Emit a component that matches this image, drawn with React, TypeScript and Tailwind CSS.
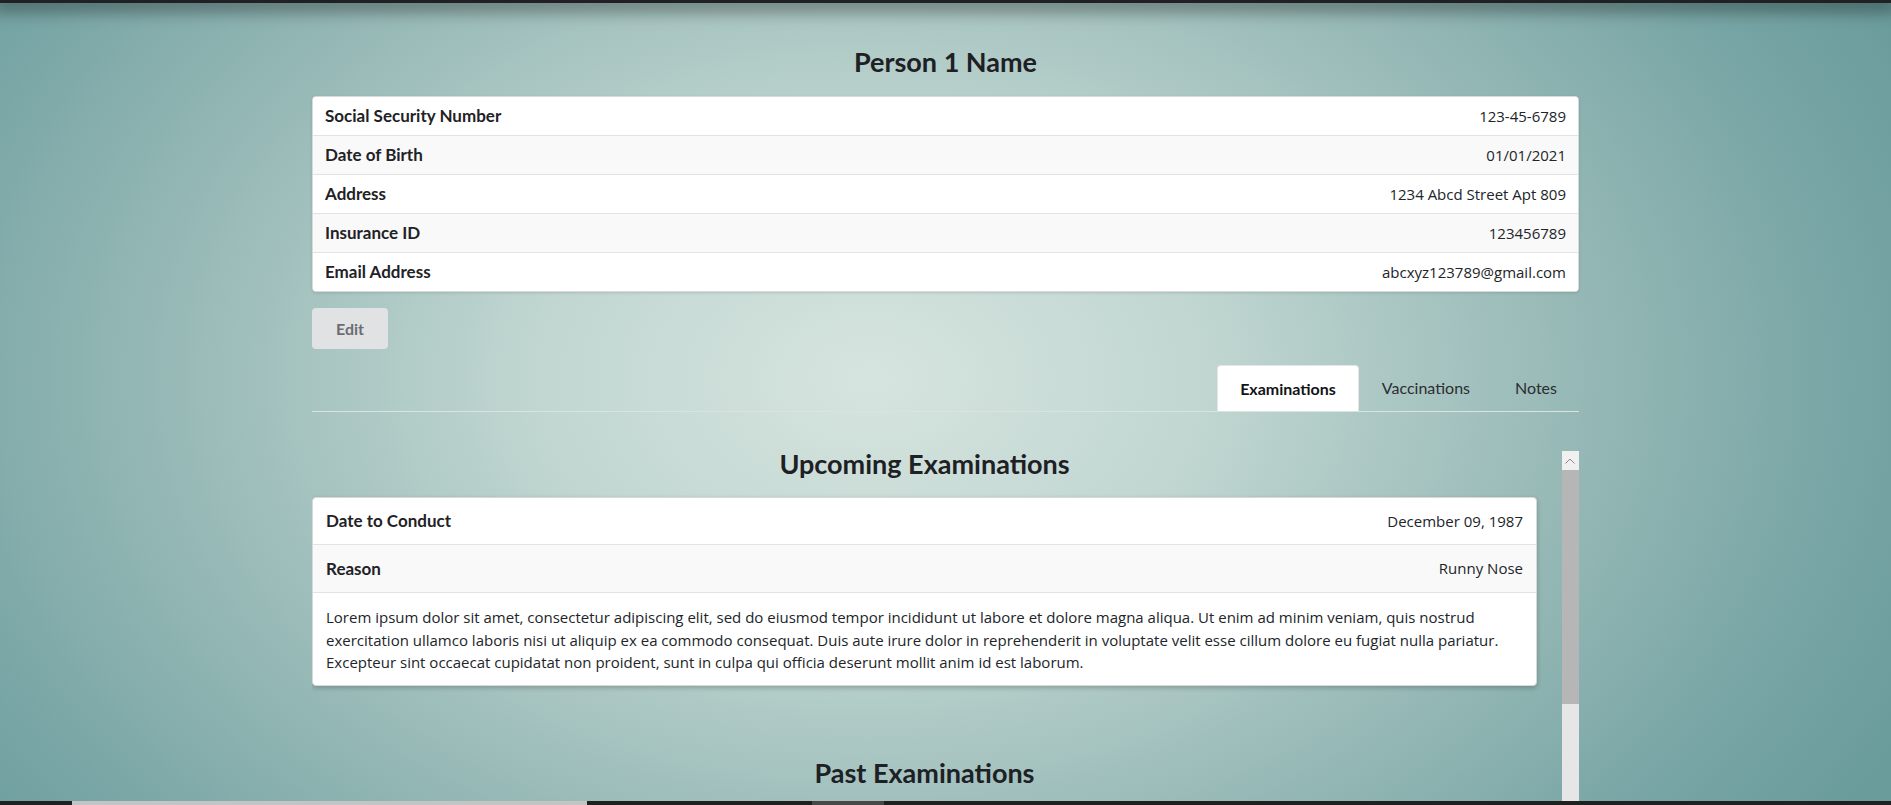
import React from "react";

const personRows: [string, string][] = [
  ["Social Security Number", "123-45-6789"],
  ["Date of Birth", "01/01/2021"],
  ["Address", "1234 Abcd Street Apt 809"],
  ["Insurance ID", "123456789"],
  ["Email Address", "abcxyz123789@gmail.com"],
];

const lorem =
  "Lorem ipsum dolor sit amet, consectetur adipiscing elit, sed do eiusmod tempor incididunt ut labore et dolore magna aliqua. Ut enim ad minim veniam, quis nostrud exercitation ullamco laboris nisi ut aliquip ex ea commodo consequat. Duis aute irure dolor in reprehenderit in voluptate velit esse cillum dolore eu fugiat nulla pariatur. Excepteur sint occaecat cupidatat non proident, sunt in culpa qui officia deserunt mollit anim id est laborum.";

function ScrollbarUp() {
  return (
    <div className="flex h-[19px] w-full items-center justify-center bg-[#f0f0f0]">
      <svg width="10" height="6" viewBox="0 0 10 6" fill="none">
        <path d="M0.5 5.5 L5 1 L9.5 5.5" stroke="#8a8a8a" strokeWidth="1" />
      </svg>
    </div>
  );
}

export default function App() {
  return (
    <div className="relative h-screen w-full overflow-hidden bg-[radial-gradient(1150px_800px_at_46%_47%,#d6e4df_0%,#c2d7d2_28%,#9bbcb9_58%,#78a5a5_85%,#6b9c9c_100%)] text-[#212529]">
      <div className="relative z-10 h-[3px] bg-[#202124] shadow-[0_2px_16px_7px_rgba(0,0,0,0.36)]" />

      <main className="mx-auto w-[67%] pt-[42px]">
        <h1 className="mb-[17px] text-center font-['Lato',sans-serif] text-[27px] font-bold leading-[34px] text-[#1d2024]">
          Person 1 Name
        </h1>

        <div className="overflow-hidden rounded-[4px] border border-[#d9d9d9] bg-white shadow-[0_1px_3px_rgba(0,0,0,0.12)]">
          {personRows.map((r, i) => (
            <div
              key={r[0]}
              className={`flex items-center justify-between px-[12px] ${i > 0 ? "h-[39px] border-t border-[#e3e3e3]" : "h-[38px]"} ${i % 2 === 1 ? "bg-[#f9f9f9]" : "bg-white"}`}
            >
              <span className="font-['Lato',sans-serif] text-[17px] font-bold text-[#1f2226]">{r[0]}</span>
              <span className="font-['Open_Sans',sans-serif] text-[15px] text-[#212529]">{r[1]}</span>
            </div>
          ))}
        </div>

        <button className="mt-4 h-[41px] w-[76px] rounded-[4px] bg-[#e1e2e4] font-['Lato',sans-serif] text-[16px] font-bold text-[#6a6d71]">
          Edit
        </button>

        <div className="mt-4 flex justify-end border-b border-[#dbe3e1]">
          <div className="flex h-[46px] items-center rounded-t-[4px] border border-b-0 border-[#e2e6e8] bg-white px-[22px] font-['Lato',sans-serif] text-[16px] font-bold text-[#121416]">
            Examinations
          </div>
          <div className="flex h-[46px] items-center px-[23px] font-['Lato',sans-serif] text-[16px] text-[#2b2e31]">
            Vaccinations
          </div>
          <div className="flex h-[46px] items-center px-[22px] font-['Lato',sans-serif] text-[16px] text-[#2b2e31]">
            Notes
          </div>
        </div>

        <div className="mt-[35px] flex h-[400px]">
          <div className="flex-1 overflow-hidden">
            <div className="w-[98%]">
              <h2 className="mb-[17px] text-center font-['Lato',sans-serif] text-[27px] font-bold leading-[33px] text-[#1d2024]">
                Upcoming Examinations
              </h2>
              <div className="overflow-hidden rounded-[4px] border border-[#d8d8d8] bg-white shadow-[0_2px_5px_rgba(0,0,0,0.22)]">
                <div className="flex h-[46px] items-center justify-between px-[13px]">
                  <span className="font-['Lato',sans-serif] text-[17px] font-bold text-[#1f2226]">Date to Conduct</span>
                  <span className="font-['Open_Sans',sans-serif] text-[15px]">December 09, 1987</span>
                </div>
                <div className="flex h-[48px] items-center justify-between border-t border-[#e3e3e3] bg-[#f9f9f9] px-[13px]">
                  <span className="font-['Lato',sans-serif] text-[17px] font-bold text-[#1f2226]">Reason</span>
                  <span className="font-['Open_Sans',sans-serif] text-[15px]">Runny Nose</span>
                </div>
                <div className="border-t border-[#e3e3e3] px-[13px] pb-[11px] pt-[13px] font-['Open_Sans',sans-serif] text-[15px] leading-[22.5px]">
                  {lorem}
                </div>
              </div>
              <h2 className="mt-[70px] text-center font-['Lato',sans-serif] text-[27px] font-bold leading-[33px] text-[#1d2024]">
                Past Examinations
              </h2>
            </div>
          </div>
          <div className="mt-[4px] flex w-[17px] flex-col">
            <ScrollbarUp />
            <div className="h-[234px] bg-[#b6b6b6]" />
            <div className="flex-1 bg-[#e6e6e6]" />
          </div>
        </div>
      </main>

      <div className="fixed inset-x-0 bottom-0 flex h-[4px]">
        <div className="w-[72px] bg-[#202020]" />
        <div className="w-[515px] bg-[#c4c4c4]" />
        <div className="w-[225px] bg-[#202020]" />
        <div className="w-[72px] bg-[#484848]" />
        <div className="flex-1 bg-[#202020]" />
      </div>
    </div>
  );
}
